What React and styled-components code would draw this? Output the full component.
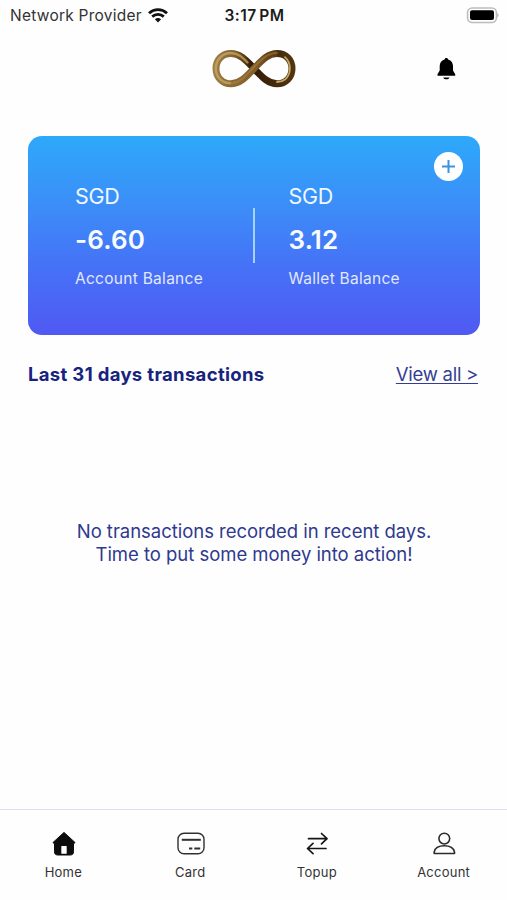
import React from "react";
import styled, { createGlobalStyle } from "styled-components";

const GlobalStyle = createGlobalStyle`
    * {
        box-sizing: border-box;
    }

    body {
        margin: 0;
        background: #fefefe;
        font-family: Inter, "Liberation Sans", sans-serif;
    }

    p,
    h1,
    h2 {
        margin: 0;
    }

    svg {
        display: block;
    }
`;

const Screen = styled.div`
    display: flex;
    flex-direction: column;
    height: 900px;
    width: 507px;
    overflow: hidden;
`;

const StatusBar = styled.div`
    display: grid;
    grid-template-columns: 1fr auto 1fr;
    align-items: center;
    height: 30px;
    padding: 0 8px 0 10px;
`;

const Carrier = styled.div`
    display: flex;
    align-items: center;
    gap: 6px;
    color: #333;
    font-size: 15.5px;
    letter-spacing: 0.24px;
    white-space: nowrap;
`;

const Clock = styled.div`
    color: #1b1b1b;
    font-size: 15.5px;
    font-weight: 600;
    letter-spacing: 0.5px;
    word-spacing: -2px;
`;

const Battery = styled.div`
    justify-self: end;
`;

const Header = styled.header`
    display: grid;
    grid-template-columns: 1fr auto 1fr;
    align-items: center;
    height: 78px;
    padding: 0 50px;
`;

const Logo = styled.div`
    grid-column: 2;
`;

const Bell = styled.button`
    justify-self: end;
    padding: 0;
    border: 0;
    background: none;
`;

const Main = styled.main`
    flex: 1;
    padding: 28px 27px 0 28px;
`;

const Card = styled.section`
    position: relative;
    display: grid;
    grid-template-columns: 225px 2px 1fr;
    height: 199px;
    border-radius: 14px;
    background: linear-gradient(180deg, #2da9fa 0%, #3b8ff8 33%, #4573f7 64%, #5059f3 100%);
`;

const Divider = styled.div`
    height: 55px;
    margin-top: 72px;
    background: #a5d3fb;
`;

const Balance = styled.div`
    padding: 46px 0 0 ${(props) => props.$inset}px;
    color: #fff;
    white-space: nowrap;
`;

const Currency = styled.p`
    font-size: 21.5px;
    line-height: 28px;
    letter-spacing: -0.3px;
    color: #eef8ff;
`;

const Amount = styled.p`
    margin-top: 13px;
    font-size: 26px;
    font-weight: 600;
    line-height: 34px;
    letter-spacing: 0.15px;
    color: #f8fbff;
`;

const BalanceLabel = styled.p`
    margin-top: 11px;
    font-size: 15.5px;
    line-height: 22px;
    letter-spacing: 0.28px;
    color: #e0e9ff;
`;

const AddButton = styled.button`
    position: absolute;
    top: 16px;
    right: 17px;
    display: grid;
    place-items: center;
    width: 29px;
    height: 29px;
    padding: 0;
    border: 0;
    border-radius: 50%;
    background: #fff;
`;

const SectionHead = styled.div`
    display: flex;
    justify-content: space-between;
    align-items: center;
    height: 26px;
    margin-top: 26px;
    padding-right: 2px;
    color: #17237f;
`;

const Title = styled.h2`
    font-size: 18.5px;
    font-weight: 650;
    letter-spacing: 0.33px;
`;

const ViewAll = styled.a`
    color: #343d93;
    font-size: 18.5px;
    letter-spacing: -0.27px;
    text-decoration: underline;
    text-decoration-thickness: 1px;
    text-underline-offset: 2px;
`;

const Empty = styled.p`
    margin-top: 133px;
    color: #2f398e;
    font-size: 18.5px;
    line-height: 23px;
    letter-spacing: -0.03px;
    text-align: center;
`;

const TabBar = styled.nav`
    display: grid;
    grid-template-columns: repeat(4, 1fr);
    height: 91px;
    border-top: 1px solid #dcdcea;
`;

const Tab = styled.div`
    display: flex;
    flex-direction: column;
    align-items: center;
    padding-top: 20px;
    color: #333;
    font-size: 13px;
    line-height: 18px;
    letter-spacing: 0.25px;
`;

const TabIcon = styled.svg.attrs({ width: 30, height: 28, viewBox: "0 0 30 28", fill: "none" })`
    margin-bottom: 5px;
`;

const WifiIcon = () => (
    <svg width="20" height="15" viewBox="0 0 20 15" fill="none" stroke="#111" strokeWidth="2.8">
        <path d="M1 5.2C6.2 .5 13.8 .5 19 5.2" />
        <path d="M4.2 8.6C7.5 5.6 12.5 5.6 15.8 8.6" />
        <path d="M10 14.6L6.9 11.3C8.6 9.7 11.4 9.7 13.1 11.3Z" fill="#111" stroke="none" />
    </svg>
);

const BatteryIcon = () => (
    <svg width="33" height="17" viewBox="0 0 33 17">
        <rect x="1.6" y="1" width="28.8" height="14.5" rx="4.5" fill="#fff" stroke="#bdbdbd" strokeWidth="1.6" />
        <rect x="4" y="3.2" width="24" height="9.8" rx="2" fill="#000" />
        <path d="M31.4 6V10.5C33 9.5 33 7 31.4 6Z" fill="#aaa" />
    </svg>
);

const InfinityLogo = () => (
    <svg width="84" height="40" viewBox="0 0 84 40" fill="none">
        <defs>
            <linearGradient id="under" x1="0" y1="0" x2="84" y2="0" gradientUnits="userSpaceOnUse">
                <stop offset="0" stopColor="#a18349" />
                <stop offset=".25" stopColor="#86632d" />
                <stop offset=".38" stopColor="#5d3c12" />
                <stop offset=".47" stopColor="#2c1806" />
                <stop offset=".6" stopColor="#3a2209" />
                <stop offset="1" stopColor="#533711" />
            </linearGradient>
            <linearGradient id="over" x1="14" y1="34" x2="70" y2="4" gradientUnits="userSpaceOnUse">
                <stop offset="0" stopColor="#8f6d36" />
                <stop offset=".5" stopColor="#835d28" />
                <stop offset="1" stopColor="#503310" />
            </linearGradient>
        </defs>
        <path
            d="M19 34.8C10 34.8 4 28 4 19.5C4 11 10 4.4 19 4.4C28 4.4 34 11.2 42 19.5C50 28 56 34.8 65 34.8C74 34.8 80 28 80 19.5C80 11 74 4.4 65 4.4"
            stroke="url(#under)"
            strokeWidth="7"
        />
        <path
            d="M19 34.2C10 34.2 3.8 28 3.8 19.5C3.8 11 10 4 19 4C26 4 30.5 8.4 35.5 13.5"
            stroke="#c9ac70"
            strokeOpacity=".7"
            strokeWidth="2.4"
            strokeLinecap="round"
        />
        <path d="M19 34.8C28 34.8 34 28 42 19.5C50 11.2 56 4.4 65 4.4" stroke="url(#over)" strokeWidth="7" />
        <path
            d="M19 34.2C27 34.2 33 27.8 41 19C49 10.6 55.5 4 65 4"
            stroke="#b38b4c"
            strokeOpacity=".45"
            strokeWidth="2"
            strokeLinecap="round"
        />
        <path d="M73 8.2C79.5 14 79.5 25 73 30.5C70.5 32.5 68 33 65 33" stroke="#c3a566" strokeWidth="1.8" strokeLinecap="round" />
    </svg>
);

const BellIcon = () => (
    <svg width="21" height="24" viewBox="0 0 21 24" fill="#000">
        <path d="M10.3 1C9.2 1 8.7 1.6 8.5 2.5C5.3 3.4 3.7 6 3.7 9.2V13.5L1.5 17.2V18.8H19.2V17.2L17 13.5V9.2C17 6 15.4 3.4 12.2 2.5C12 1.6 11.4 1 10.3 1Z" />
        <path d="M7.2 20.4H13.5C12.8 23 7.9 23 7.2 20.4Z" />
    </svg>
);

const HomeIcon = () => (
    <TabIcon>
        <path
            d="M16 2.4L27 12.5L25.5 14V21.5C25.5 24 24.5 25 22 25H10C7.5 25 6.5 24 6.5 21.5V14L5 12.5Z"
            fill="#0c0c0c"
            stroke="#0c0c0c"
            strokeLinejoin="round"
        />
        <rect x="13.3" y="16" width="5.4" height="7.7" rx=".5" fill="#fff" />
    </TabIcon>
);

const CardIcon = () => (
    <TabIcon stroke="#303030" strokeWidth="1.4">
        <rect x="3" y="3.3" width="26" height="20.5" rx="6" />
        <path d="M6.8 9.8H25.8" strokeWidth="2" />
        <path d="M14 18.5H17.3M19.3 18.5H25.2" strokeWidth="2" />
    </TabIcon>
);

const TopupIcon = () => (
    <TabIcon stroke="#161616" strokeWidth="1.7" strokeLinecap="round" strokeLinejoin="round">
        <path d="M6.5 8.7H25M19.5 3.5L25 8.7L19.5 13.9" />
        <path d="M24 18.5H5.5M11 13.3L5.5 18.5L11 23.7" />
    </TabIcon>
);

const AccountIcon = () => (
    <TabIcon stroke="#2b2b2b" strokeWidth="1.6">
        <circle cx="15.3" cy="8.6" r="5.4" />
        <path d="M5.2 23.5V22C5.9 18 9.7 15.8 15.3 15.8C20.9 15.8 24.7 18 25.5 22V23.5Z" strokeLinejoin="round" />
    </TabIcon>
);

const tabs = [
    { label: "Home", icon: HomeIcon },
    { label: "Card", icon: CardIcon },
    { label: "Topup", icon: TopupIcon },
    { label: "Account", icon: AccountIcon },
];

const App = () => {
    return (
        <Screen>
            <GlobalStyle />
            <StatusBar>
                <Carrier>
                    Network Provider
                    <WifiIcon />
                </Carrier>
                <Clock>3:17 PM</Clock>
                <Battery>
                    <BatteryIcon />
                </Battery>
            </StatusBar>
            <Header>
                <Logo>
                    <InfinityLogo />
                </Logo>
                <Bell>
                    <BellIcon />
                </Bell>
            </Header>
            <Main>
                <Card>
                    <Balance $inset={47}>
                        <Currency>SGD</Currency>
                        <Amount>-6.60</Amount>
                        <BalanceLabel>Account Balance</BalanceLabel>
                    </Balance>
                    <Divider />
                    <Balance $inset={33.5}>
                        <Currency>SGD</Currency>
                        <Amount>3.12</Amount>
                        <BalanceLabel>Wallet Balance</BalanceLabel>
                    </Balance>
                    <AddButton>
                        <svg width="15" height="15" viewBox="0 0 15 15" stroke="#3b94e0" strokeWidth="2">
                            <path d="M7.5 1V14M1 7.5H14" />
                        </svg>
                    </AddButton>
                </Card>
                <SectionHead>
                    <Title>Last 31 days transactions</Title>
                    <ViewAll>View all &gt;</ViewAll>
                </SectionHead>
                <Empty>
                    No transactions recorded in recent days.
                    <br />
                    Time to put some money into action!
                </Empty>
            </Main>
            <TabBar>
                {tabs.map(({ label, icon: Icon }) => (
                    <Tab key={label}>
                        <Icon />
                        {label}
                    </Tab>
                ))}
            </TabBar>
        </Screen>
    );
};

export default App;
